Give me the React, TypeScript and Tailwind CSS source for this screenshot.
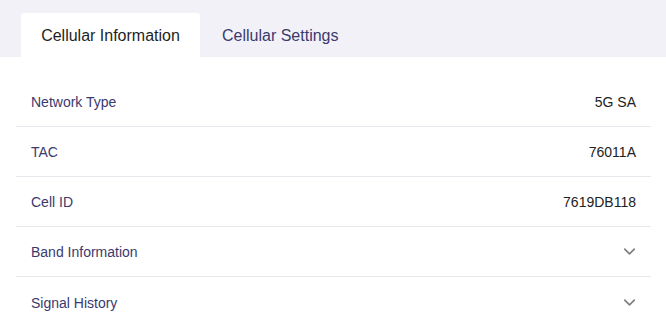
import { ChevronDown } from 'lucide-react';

const rows = [
  { label: 'Network Type', value: '5G SA' },
  { label: 'TAC', value: '76011A' },
  { label: 'Cell ID', value: '7619DB118' },
];

const sections = ['Band Information', 'Signal History'];

export default function App() {
  return (
    <div className="w-[666px] h-[332px] bg-white font-['Liberation_Sans',Arial,sans-serif] overflow-hidden">
      <div className="flex items-end h-[57px] bg-[#f2f1f7] pl-[21px]">
        <button className="h-[44px] w-[179px] bg-white rounded-t-[3px] text-[16px] text-[#1f1f1f] pt-[1px]">
          Cellular Information
        </button>
        <button className="h-[44px] px-[22px] text-[16px] text-[#3b3a6e] pt-[1px]">
          Cellular Settings
        </button>
      </div>

      <div className="pt-[20px] pl-[16px] pr-[15px]">
        {rows.map(r => (
          <div key={r.label} className="flex items-center justify-between h-[50px] pt-[2px] px-[15px] border-b border-[#e8e7ed] text-[14px]">
            <span className="text-[#3b3a6e]">{r.label}</span>
            <span className="text-[#222222]">{r.value}</span>
          </div>
        ))}
        {sections.map((s, i) => (
          <div
            key={s}
            className={"flex items-center justify-between h-[50px] pt-[2px] pl-[15px] pr-[12px] text-[14px] " + (i < sections.length - 1 ? 'border-b border-[#e8e7ed]' : '')}
          >
            <span className="text-[#3b3a6e]">{s}</span>
            <ChevronDown className="w-[19px] h-[19px] text-[#808080] -mt-[2px]" strokeWidth={2.2} />
          </div>
        ))}
      </div>
    </div>
  );
}
